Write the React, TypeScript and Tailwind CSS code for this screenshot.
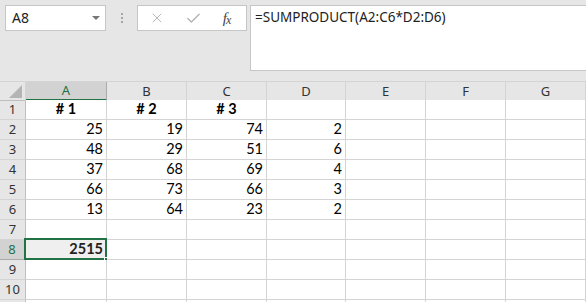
import { X, Check } from "lucide-react";

const cols = ["A", "B", "C", "D", "E", "F", "G"];

const rows: (string | number)[][] = [
  ["# 1", "# 2", "# 3", "", "", "", ""],
  [25, 19, 74, 2, "", "", ""],
  [48, 29, 51, 6, "", "", ""],
  [37, 68, 69, 4, "", "", ""],
  [66, 73, 66, 3, "", "", ""],
  [13, 64, 23, 2, "", "", ""],
  ["", "", "", "", "", "", ""],
  [2515, "", "", "", "", "", ""],
  ["", "", "", "", "", "", ""],
  ["", "", "", "", "", "", ""],
  ["", "", "", "", "", "", ""],
];

const grid = "grid grid-cols-[26px_81px_80px_80px_79px_80px_80px_80px]";

export default function App() {
  return (
    <div className="w-[586px] h-[302px] overflow-hidden bg-[#e6e6e6] font-['Noto_Sans',sans-serif] leading-none">
      {/* formula bar */}
      <div className="h-[81px] flex items-start pt-[5px] pl-[5px]">
        <div className="w-[101px] h-[26px] bg-white border border-[#c6c6c6] flex items-center justify-between pl-[6px] pr-[5px]">
          <span className="text-[14px] text-[#222]">A8</span>
          <span className="w-0 h-0 border-l-[4px] border-r-[4px] border-t-[4px] border-l-transparent border-r-transparent border-t-[#777]" />
        </div>
        <div className="w-[31px] h-[26px] flex flex-col items-center justify-center gap-[2px]">
          <span className="w-[2px] h-[2px] bg-[#a6a6a6]" />
          <span className="w-[2px] h-[2px] bg-[#a6a6a6]" />
          <span className="w-[2px] h-[2px] bg-[#a6a6a6]" />
        </div>
        <div className="w-[110px] h-[26px] bg-white border border-[#c6c6c6] flex items-center">
          <div className="w-[38px] flex justify-center">
            <X size={16} strokeWidth={1.4} color="#b4b4b4" />
          </div>
          <div className="w-[34px] flex justify-center">
            <Check size={17} strokeWidth={2} color="#b4b4b4" />
          </div>
          <div className="w-[34px] flex justify-center items-end text-[#444] italic font-['Liberation_Serif',serif] text-[15px]">
            f<span className="text-[12px] -ml-px">x</span>
          </div>
        </div>
        <div className="ml-[3px] flex-1 h-[66px] bg-white border border-[#c6c6c6] border-r-0 pl-[4px] pt-[5px] text-[13.5px] text-[#222]">
          =SUMPRODUCT(A2:C6*D2:D6)
        </div>
      </div>

      {/* column headers */}
      <div className={`${grid} grid-rows-[19px] h-[19px] border-t border-[#d4d4d4] text-[13px] text-[#333]`}>
        <div className="relative border-r border-[#d4d4d4] border-b border-b-[#bfbfbf]">
          <svg className="absolute right-[3px] bottom-[2px]" width="13" height="13" viewBox="0 0 13 13">
            <polygon points="13,0 13,13 0,13" fill="#b4b4b4" />
          </svg>
        </div>
        {cols.map((c, i) => (
          <div
            key={c}
            className={
              i === 0
                ? "flex items-center justify-center bg-[#d2d2d2] text-[#217346] border-r border-[#ababab] border-b-2 border-b-[#217346]"
                : "flex items-center justify-center border-r border-[#d4d4d4] border-b border-b-[#bfbfbf]"
            }
          >
            {c}
          </div>
        ))}
      </div>

      {/* rows */}
      {rows.map((r, ri) => (
        <div key={ri} className={`${grid} grid-rows-[20px] h-[20px]`}>
          <div
            className={
              ri === 7
                ? "flex items-center justify-center bg-[#d2d2d2] text-[#217346] border-r-2 border-[#217346] border-b border-b-[#ababab] text-[13px]"
                : "flex items-center justify-center text-[#333] border-r border-[#bfbfbf] border-b border-b-[#d4d4d4] text-[13px]"
            }
          >
            {ri < 10 ? ri + 1 : ""}
          </div>
          {r.map((v, ci) => {
            const sel = ri === 7 && ci === 0;
            return (
              <div
                key={ci}
                className={`relative flex items-center border-r border-b border-[#d4d4d4] font-['Lato',sans-serif] text-[14.5px] ${
                  ri === 0 ? "justify-center font-bold" : "justify-end pr-[3px]"
                } ${sel ? "bg-[#efefef] font-bold text-[#222]" : "bg-white text-black"}`}
              >
                {v}
                {sel && (
                  <>
                    <span className="absolute -left-[2px] -top-[2px] -right-px -bottom-px border-2 border-[#217346]" />
                    <span className="absolute -right-[4px] -bottom-[4px] w-[6px] h-[6px] bg-[#217346] border border-white" />
                  </>
                )}
              </div>
            );
          })}
        </div>
      ))}
    </div>
  );
}
